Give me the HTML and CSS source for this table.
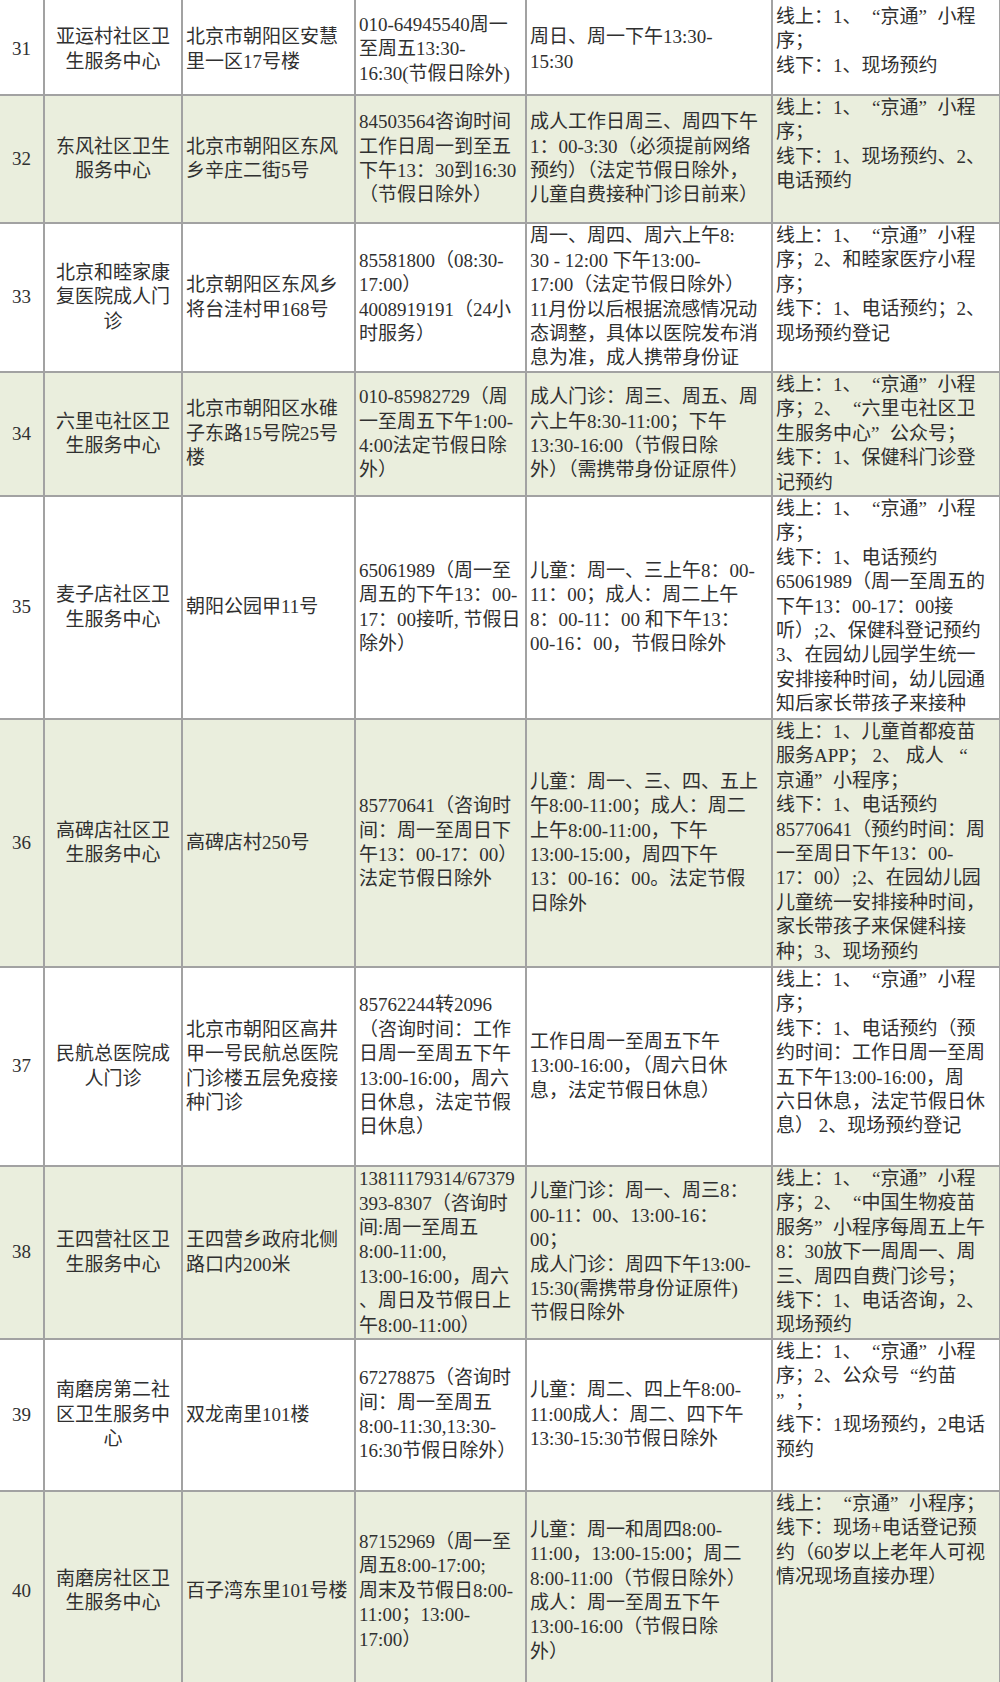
FILE: index.html
```html
<!DOCTYPE html>
<html lang="zh-CN">
<head>
<meta charset="utf-8">
<title>接种点信息</title>
<link rel="stylesheet" href="styles.css">
</head>
<body>
<table class="sites">
  <colgroup>
    <col class="c-no"><col class="c-name"><col class="c-addr"><col class="c-tel"><col class="c-time"><col class="c-way">
  </colgroup>
  <tbody>
    <tr class="r31">
      <td class="no">31</td>
      <td class="name">亚运村社区卫<br>生服务中心</td>
      <td>北京市朝阳区安慧<br>里一区17号楼</td>
      <td>010-64945540周一<br>至周五13:30-<br>16:30(节假日除外)</td>
      <td>周日、周一下午13:30-<br>15:30</td>
      <td class="way">线上：1、<span class="ql">“</span>京通<span class="qr">”</span>小程<br>序；<br>线下：1、现场预约</td>
    </tr>
    <tr class="r32 alt">
      <td class="no">32</td>
      <td class="name">东风社区卫生<br>服务中心</td>
      <td>北京市朝阳区东风<br>乡辛庄二街5号</td>
      <td>84503564咨询时间<br>工作日周一到至五<br>下午13：30到16:30<br>（节假日除外）</td>
      <td>成人工作日周三、周四下午<br>1：00-3:30（必须提前网络<br>预约）（法定节假日除外，<br>儿童自费接种门诊日前来）</td>
      <td class="way">线上：1、<span class="ql">“</span>京通<span class="qr">”</span>小程<br>序；<br>线下：1、现场预约、2、<br>电话预约</td>
    </tr>
    <tr class="r33">
      <td class="no">33</td>
      <td class="name">北京和睦家康<br>复医院成人门<br>诊</td>
      <td>北京朝阳区东风乡<br>将台洼村甲168号</td>
      <td>85581800（08:30-<br>17:00）<br>4008919191（24小<br>时服务）</td>
      <td>周一、周四、周六上午8:<br>30 - 12:00 下午13:00-<br>17:00（法定节假日除外）<br>11月份以后根据流感情况动<br>态调整，具体以医院发布消<br>息为准，成人携带身份证</td>
      <td class="way">线上：1、<span class="ql">“</span>京通<span class="qr">”</span>小程<br>序；2、和睦家医疗小程<br>序；<br>线下：1、电话预约；2、<br>现场预约登记</td>
    </tr>
    <tr class="r34 alt">
      <td class="no">34</td>
      <td class="name">六里屯社区卫<br>生服务中心</td>
      <td>北京市朝阳区水碓<br>子东路15号院25号<br>楼</td>
      <td>010-85982729（周<br>一至周五下午1:00-<br>4:00法定节假日除<br>外）</td>
      <td>成人门诊：周三、周五、周<br>六上午8:30-11:00；下午<br>13:30-16:00（节假日除<br>外）（需携带身份证原件）</td>
      <td class="way">线上：1、<span class="ql">“</span>京通<span class="qr">”</span>小程<br>序；2、<span class="ql">“</span>六里屯社区卫<br>生服务中心<span class="qr">”</span>公众号；<br>线下：1、保健科门诊登<br>记预约</td>
    </tr>
    <tr class="r35">
      <td class="no">35</td>
      <td class="name">麦子店社区卫<br>生服务中心</td>
      <td>朝阳公园甲11号</td>
      <td>65061989（周一至<br>周五的下午13：00-<br>17：00接听, 节假日<br>除外）</td>
      <td>儿童：周一、三上午8：00-<br>11：00；成人：周二上午<br>8：00-11：00 和下午13：<br>00-16：00，节假日除外</td>
      <td class="way">线上：1、<span class="ql">“</span>京通<span class="qr">”</span>小程<br>序；<br>线下：1、电话预约<br>65061989（周一至周五的<br>下午13：00-17：00接<br>听）;2、保健科登记预约<br>3、在园幼儿园学生统一<br>安排接种时间，幼儿园通<br>知后家长带孩子来接种</td>
    </tr>
    <tr class="r36 alt">
      <td class="no">36</td>
      <td class="name">高碑店社区卫<br>生服务中心</td>
      <td>高碑店村250号</td>
      <td>85770641（咨询时<br>间：周一至周日下<br>午13：00-17：00）<br>法定节假日除外</td>
      <td>儿童：周一、三、四、五上<br>午8:00-11:00；成人：周二<br>上午8:00-11:00，下午<br>13:00-15:00，周四下午<br>13：00-16：00。法定节假<br>日除外</td>
      <td class="way">线上：1、儿童首都疫苗<br>服务APP； 2、 成人 <span class="ql">“</span><br>京通<span class="qr">”</span>小程序；<br>线下：1、电话预约<br>85770641（预约时间：周<br>一至周日下午13：00-<br>17：00）;2、在园幼儿园<br>儿童统一安排接种时间，<br>家长带孩子来保健科接<br>种；3、现场预约</td>
    </tr>
    <tr class="r37">
      <td class="no">37</td>
      <td class="name">民航总医院成<br>人门诊</td>
      <td>北京市朝阳区高井<br>甲一号民航总医院<br>门诊楼五层免疫接<br>种门诊</td>
      <td>85762244转2096<br>（咨询时间：工作<br>日周一至周五下午<br>13:00-16:00，周六<br>日休息，法定节假<br>日休息）</td>
      <td>工作日周一至周五下午<br>13:00-16:00，（周六日休<br>息，法定节假日休息）</td>
      <td class="way">线上：1、<span class="ql">“</span>京通<span class="qr">”</span>小程<br>序；<br>线下：1、电话预约（预<br>约时间：工作日周一至周<br>五下午13:00-16:00，周<br>六日休息，法定节假日休<br>息） 2、现场预约登记</td>
    </tr>
    <tr class="r38 alt">
      <td class="no">38</td>
      <td class="name">王四营社区卫<br>生服务中心</td>
      <td>王四营乡政府北侧<br>路口内200米</td>
      <td>13811179314/67379<br>393-8307（咨询时<br>间:周一至周五<br>8:00-11:00,<br>13:00-16:00，周六<br>、周日及节假日上<br>午8:00-11:00）</td>
      <td>儿童门诊：周一、周三8：<br>00-11：00、13:00-16：<br>00；<br>成人门诊：周四下午13:00-<br>15:30(需携带身份证原件)<br>节假日除外</td>
      <td class="way">线上：1、<span class="ql">“</span>京通<span class="qr">”</span>小程<br>序；2、<span class="ql">“</span>中国生物疫苗<br>服务<span class="qr">”</span>小程序每周五上午<br>8：30放下一周周一、周<br>三、周四自费门诊号；<br>线下：1、电话咨询，2、<br>现场预约</td>
    </tr>
    <tr class="r39">
      <td class="no">39</td>
      <td class="name">南磨房第二社<br>区卫生服务中<br>心</td>
      <td>双龙南里101楼</td>
      <td>67278875（咨询时<br>间：周一至周五<br>8:00-11:30,13:30-<br>16:30节假日除外）</td>
      <td>儿童：周二、四上午8:00-<br>11:00成人：周二、四下午<br>13:30-15:30节假日除外</td>
      <td class="way">线上：1、<span class="ql">“</span>京通<span class="qr">”</span>小程<br>序；2、公众号<span class="ql">“</span>约苗<br><span class="qr">”</span>；<br>线下：1现场预约，2电话<br>预约</td>
    </tr>
    <tr class="r40 alt">
      <td class="no">40</td>
      <td class="name">南磨房社区卫<br>生服务中心</td>
      <td>百子湾东里101号楼</td>
      <td>87152969（周一至<br>周五8:00-17:00;<br>周末及节假日8:00-<br>11:00；13:00-<br>17:00）</td>
      <td>儿童：周一和周四8:00-<br>11:00，13:00-15:00；周二<br>8:00-11:00（节假日除外）<br>成人：周一至周五下午<br>13:00-16:00（节假日除<br>外）</td>
      <td class="way">线上：<span class="ql">“</span>京通<span class="qr">”</span>小程序；<br>线下：现场+电话登记预<br>约（60岁以上老年人可视<br>情况现场直接办理）</td>
    </tr>
  </tbody>
</table>
</body>
</html>
```

FILE: styles.css
```css
html, body {
  margin: 0;
  padding: 0;
  background: #ffffff;
}

body {
  width: 1000px;
  height: 1682px;
  overflow: hidden;
  font-family: "Liberation Serif", "Noto Sans CJK SC", serif;
  font-size: 19px;
  line-height: 24.4px;
  color: #303030;
}

.sites {
  width: 1000px;
  border-collapse: collapse;
  table-layout: fixed;
}

.c-no { width: 44px; }
.c-name { width: 138px; }
.c-addr { width: 173px; }
.c-tel { width: 171px; }
.c-time { width: 246px; }
.c-way { width: 228px; }

.sites td {
  border: 2px solid #a2a2a2;
  padding: 0 3px;
  vertical-align: middle;
  text-align: left;
  white-space: nowrap;
  overflow: hidden;
}

.sites tr:first-child td {
  border-top: none;
  padding-top: 5px;
}

.sites td:first-child {
  border-left: none;
}

.sites tr.alt td {
  background: #eaeedd;
}

.sites td.no,
.sites td.name {
  text-align: center;
}

.sites td.way {
  vertical-align: top;
}

.ql,
.qr {
  display: inline-block;
  width: 1em;
}

.ql { text-align: right; }
.qr { text-align: left; }

.r31 { height: 95px; }
.r32 { height: 128px; }
.r33 { height: 149px; }
.r34 { height: 124px; }
.r35 { height: 223px; }
.r36 { height: 248px; }
.r37 { height: 199px; }
.r38 { height: 173px; }
.r39 { height: 152px; }
.r40 { height: 200px; }
```
